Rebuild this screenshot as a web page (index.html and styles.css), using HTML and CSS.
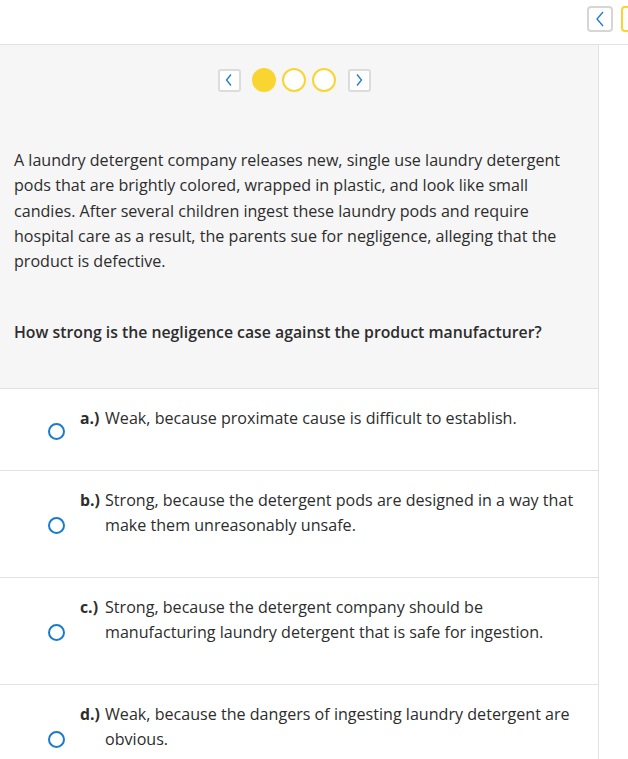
FILE: index.html
```html
<!DOCTYPE html>
<html>
<head>
<meta charset="utf-8">
<link rel="stylesheet" href="styles.css">
</head>
<body>
<div class="topbar">
  <button class="nav-btn" aria-label="Previous">
    <svg width="12" height="18" viewBox="0 0 12 18"><path d="M9 2 L3 9 L9 16" fill="none" stroke="#1a7cc9" stroke-width="1.3"/></svg>
  </button>
  <div class="nav-btn yellow"></div>
</div>
<div class="page">
  <div class="main">
    <div class="stem">
      <div class="pager">
        <button class="pg-btn" aria-label="Previous">
          <svg width="10" height="14" viewBox="0 0 10 14"><path d="M7 1.5 L2.5 7 L7 12.5" fill="none" stroke="#1a7cc9" stroke-width="1.3"/></svg>
        </button>
        <span class="dot filled"></span>
        <span class="dot"></span>
        <span class="dot"></span>
        <button class="pg-btn" aria-label="Next">
          <svg width="10" height="14" viewBox="0 0 10 14"><path d="M3 1.5 L7.5 7 L3 12.5" fill="none" stroke="#1a7cc9" stroke-width="1.3"/></svg>
        </button>
      </div>
      <p class="scenario">A laundry detergent company releases new, single use laundry detergent pods that are brightly colored, wrapped in plastic, and look like small candies. After several children ingest these laundry pods and require hospital care as a result, the parents sue for negligence, alleging that the product is defective.</p>
      <p class="question">How strong is the negligence case against the product manufacturer?</p>
    </div>
    <div class="options">
      <label class="option">
        <span class="radio"></span>
        <span class="letter">a.)</span>
        <span class="text">Weak, because proximate cause is difficult to establish.</span>
      </label>
      <label class="option">
        <span class="radio"></span>
        <span class="letter">b.)</span>
        <span class="text">Strong, because the detergent pods are designed in a way that make them unreasonably unsafe.</span>
      </label>
      <label class="option">
        <span class="radio"></span>
        <span class="letter">c.)</span>
        <span class="text">Strong, because the detergent company should be manufacturing laundry detergent that is safe for ingestion.</span>
      </label>
      <label class="option">
        <span class="radio"></span>
        <span class="letter">d.)</span>
        <span class="text">Weak, because the dangers of ingesting laundry detergent are obvious.</span>
      </label>
    </div>
  </div>
  <div class="side"></div>
</div>
</body>
</html>
```
FILE: styles.css
```css
html, body {
  margin: 0;
  padding: 0;
  background: #fff;
}
body {
  font-family: "Open Sans", Lato, sans-serif;
  color: #2d2d2d;
  width: 628px;
  overflow: hidden;
}
.topbar {
  height: 45px;
  border-bottom: 1px solid #e2e2e2;
  display: flex;
  justify-content: flex-end;
  align-items: flex-start;
  gap: 8px;
  padding-top: 6px;
  box-sizing: border-box;
  margin-right: -19px;
}
.nav-btn {
  width: 26px;
  height: 26px;
  box-sizing: border-box;
  border: 2px solid #d6d6d6;
  border-radius: 4px;
  background: #fff;
  padding: 0;
  display: flex;
  align-items: center;
  justify-content: center;
}
.nav-btn.yellow {
  border-color: #f9d532;
}
.page {
  display: flex;
}
.main {
  width: 598px;
  border-right: 1px solid #e2e2e2;
  flex: none;
}
.stem {
  background: #f6f6f6;
  padding: 23px 14px 0 14px;
  height: 344px;
  box-sizing: border-box;
  border-bottom: 1px solid #e2e2e2;
}
.pager {
  display: flex;
  align-items: center;
  justify-content: center;
  gap: 6px;
  margin-left: -10px;
}
.pg-btn {
  width: 23px;
  height: 23px;
  box-sizing: border-box;
  border: 2px solid #dcdcdc;
  border-radius: 3px;
  background: #fff;
  padding: 0;
  display: flex;
  align-items: center;
  justify-content: center;
}
.pg-btn:first-child { margin-right: 5px; }
.pg-btn:last-child { margin-left: 6px; }
.dot {
  width: 24px;
  height: 24px;
  border-radius: 50%;
  box-sizing: border-box;
  border: 2px solid #f9d532;
  background: #fff;
}
.dot.filled {
  background: #f9d532;
}
.scenario {
  margin: 56px 0 0 0;
  font-size: 16.1px;
  line-height: 25.25px;
}
.question {
  margin: 46px 0 0 0;
  font-size: 15.8px;
  line-height: 25px;
  font-weight: 600;
}
.options {
  display: flex;
  flex-direction: column;
}
.option {
  display: grid;
  grid-template-columns: 32px 25px 1fr;
  align-items: center;
  padding: 17px 20px 0 48px;
  border-bottom: 1px solid #e2e2e2;
  box-sizing: border-box;
  font-size: 16.1px;
  line-height: 25px;
}
.option .radio {
  width: 17px;
  height: 17px;
  box-sizing: border-box;
  border: 2px solid #1a7cc9;
  border-radius: 50%;
  align-self: center;
  grid-row: 1;
  margin-top: -14px;
}
.option .letter {
  font-weight: 700;
  align-self: start;
  font-size: 15.8px;
}
.option .text {
  align-self: start;
  padding-bottom: 39px;
}
.side {
  flex: 1;
}
```
